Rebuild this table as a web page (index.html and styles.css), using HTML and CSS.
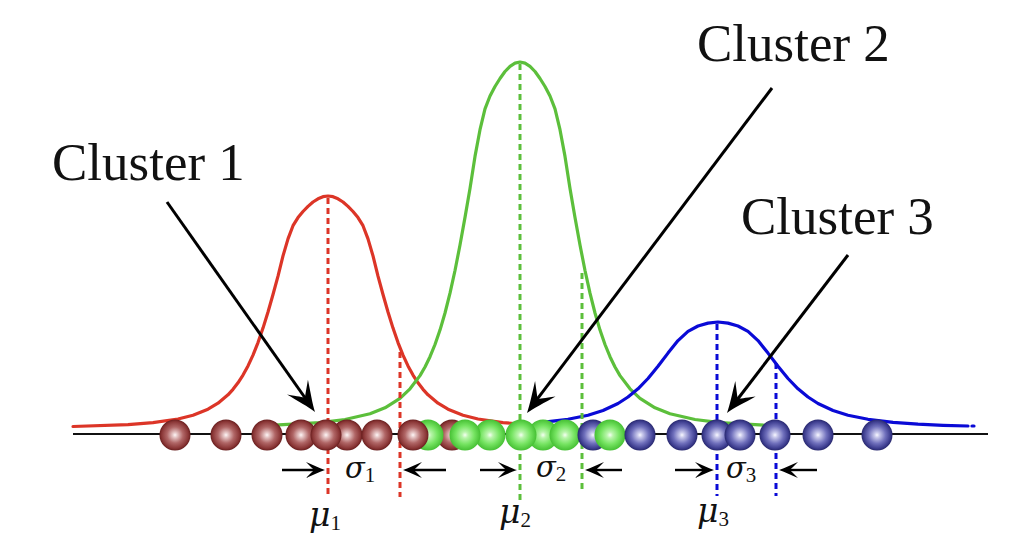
FILE: index.html
```html
<!DOCTYPE html>
<html lang="en">
<head>
<meta charset="utf-8">
<title>Gaussian mixture clusters</title>
<link rel="stylesheet" href="styles.css">
</head>
<body>
<svg class="figure" viewBox="0 0 1012 548" width="1012" height="548" xmlns="http://www.w3.org/2000/svg">
  <defs>
    <radialGradient id="ballRed" cx="50%" cy="50%" r="50%" fx="50%" fy="50%">
      <stop offset="0%" stop-color="#fdf6f6"/>
      <stop offset="16%" stop-color="#e6c6c6"/>
      <stop offset="52%" stop-color="#b06666"/>
      <stop offset="86%" stop-color="#8a3636"/>
      <stop offset="100%" stop-color="#681e1e"/>
    </radialGradient>
    <radialGradient id="ballGreen" cx="50%" cy="50%" r="50%" fx="50%" fy="50%">
      <stop offset="0%" stop-color="#f4fff1"/>
      <stop offset="20%" stop-color="#b9f5ab"/>
      <stop offset="60%" stop-color="#76e462"/>
      <stop offset="100%" stop-color="#46c034"/>
    </radialGradient>
    <radialGradient id="ballBlue" cx="50%" cy="50%" r="50%" fx="50%" fy="50%">
      <stop offset="0%" stop-color="#f8f8ff"/>
      <stop offset="16%" stop-color="#cacaec"/>
      <stop offset="55%" stop-color="#7070bc"/>
      <stop offset="86%" stop-color="#3e3e90"/>
      <stop offset="100%" stop-color="#28286e"/>
    </radialGradient>
    <path id="ah" d="M0,0 C-5,-1.5 -12,-5 -19,-8 C-14,-3 -12,-1 -11,0 C-12,1 -14,3 -19,8 C-12,5 -5,1.5 0,0 Z"/>
  </defs>

  <!-- axis -->
  <line class="axis" x1="73" y1="434" x2="988" y2="434"/>

  <!-- density curves -->
  <polyline class="curve red" points="73,426.5 128,424.6 153,422.6 178,419 193,415.2 208,409.2 218,403.2 228,394.8 233,389.3 238,382.8 243,375.1 248,365.9 253,355.1 258,342.6 263,328.1 268,312 273,294.5 278,276.2 283,255.9 288,238.9 293,225.7 298,217.6 303,211.5 308,206.4 313,202 318,198.8 323,196.7 328,196 333,196.7 338,198.8 343,202 348,206.4 353,211.5 358,217.6 363,225.7 368,238.9 373,255.9 378,276.2 383,294.5 388,312 393,328.1 398,342.6 403,355.1 408,365.9 413,375.1 418,382.8 423,389.3 428,394.8 438,403.2 448,409.2 463,415.2 478,419 503,422.6 528,424.6"/>
  <polyline class="curve green" points="265,425.7 320,422.7 345,419.5 370,413.8 385,407.8 400,398.3 410,388.8 420,375.6 425,367 430,356.7 435,344.5 440,330.1 445,313 450,293.2 455,270.5 460,245 465,217.4 470,188.5 475,156.4 480,129.7 485,108.8 490,96 495,86.5 500,78.5 505,71.5 510,66.4 515,63.1 520,62 525,63.1 530,66.4 535,71.5 540,78.5 545,86.5 550,96 555,108.8 560,129.7 565,156.4 570,188.5 575,217.4 580,245 585,270.5 590,293.2 595,313 600,330.1 605,344.5 610,356.7 615,367 620,375.6 630,388.8 640,398.3 655,407.8 670,413.8 695,419.5 720,422.7 775,425.7"/>
  <polyline class="curve blue" points="540,422.6 568,419.3 588,415.2 603,410.5 618,403.5 628,397 638,388.8 648,378.5 658,366.3 668,353.1 678,340.6 688,331.3 698,326 708,323.1 718,322 728,323.1 738,326 748,331.3 758,340.6 768,353.1 778,366.3 788,378.5 798,388.8 808,397 818,403.5 833,410.5 848,415.2 868,419.3 893,422.4 918,424.2 943,425.3 968,426"/>
  <line class="curve blue" x1="972" y1="426" x2="974" y2="426"/>

  <!-- mean / sigma markers -->
  <line class="dash red" x1="328" y1="198" x2="328" y2="498"/>
  <line class="dash red" x1="400" y1="352" x2="400" y2="497"/>
  <line class="dash green" x1="520" y1="64" x2="520" y2="500"/>
  <line class="dash green" x1="582" y1="273" x2="582" y2="490"/>
  <line class="dash blue" x1="717" y1="324" x2="717" y2="496"/>
  <line class="dash blue" x1="776" y1="363" x2="776" y2="496"/>

  <!-- data points -->
  <g class="balls">
    <circle class="ball-red" cx="175" cy="435" r="15.5"/>
    <circle class="ball-red" cx="226" cy="435" r="15.5"/>
    <circle class="ball-red" cx="267" cy="435" r="15.5"/>
    <circle class="ball-red" cx="301" cy="435" r="15.5"/>
    <circle class="ball-red" cx="347" cy="435" r="15.5"/>
    <circle class="ball-red" cx="377" cy="435" r="15.5"/>
    <circle class="ball-red" cx="326" cy="435" r="15.5"/>
    <circle class="ball-red" cx="452" cy="435" r="15.5"/>
    <circle class="ball-green" cx="428" cy="435" r="15.5"/>
    <circle class="ball-red" cx="413" cy="435" r="15.5"/>
    <circle class="ball-green" cx="490" cy="435" r="15.5"/>
    <circle class="ball-green" cx="465" cy="435" r="15.5"/>
    <circle class="ball-green" cx="543" cy="435" r="15.5"/>
    <circle class="ball-green" cx="565" cy="435" r="15.5"/>
    <circle class="ball-green" cx="521" cy="435" r="15.5"/>
    <circle class="ball-blue" cx="593" cy="435" r="15.5"/>
    <circle class="ball-green" cx="610" cy="435" r="15.5"/>
    <circle class="ball-blue" cx="640" cy="435" r="15.5"/>
    <circle class="ball-blue" cx="682" cy="435" r="15.5"/>
    <circle class="ball-blue" cx="717" cy="435" r="15.5"/>
    <circle class="ball-blue" cx="740" cy="435" r="15.5"/>
    <circle class="ball-blue" cx="775" cy="435" r="15.5"/>
    <circle class="ball-blue" cx="818" cy="435" r="15.5"/>
    <circle class="ball-blue" cx="877" cy="435" r="15.5"/>
  </g>

  <!-- cluster pointers -->
  <line class="shaft thick" x1="167" y1="202" x2="308" y2="402"/>
  <use class="head" href="#ah" transform="translate(315,412) rotate(54.8) scale(1.6)"/>
  <line class="shaft thick" x1="772" y1="88" x2="534" y2="403.4"/>
  <use class="head" href="#ah" transform="translate(527,413) rotate(127) scale(1.6)"/>
  <line class="shaft thick" x1="848" y1="255" x2="734.3" y2="403.5"/>
  <use class="head" href="#ah" transform="translate(727,413) rotate(127.4) scale(1.6)"/>

  <!-- sigma arrows -->
  <line class="shaft" x1="282" y1="470" x2="316" y2="470"/>
  <use class="head" href="#ah" transform="translate(325,470)"/>
  <line class="shaft" x1="446" y1="470" x2="412" y2="470"/>
  <use class="head" href="#ah" transform="translate(403,470) rotate(180)"/>

  <line class="shaft" x1="480" y1="470" x2="508" y2="470"/>
  <use class="head" href="#ah" transform="translate(517,470)"/>
  <line class="shaft" x1="622" y1="470" x2="594" y2="470"/>
  <use class="head" href="#ah" transform="translate(585,470) rotate(180)"/>

  <line class="shaft" x1="675" y1="470" x2="705" y2="470"/>
  <use class="head" href="#ah" transform="translate(714,470)"/>
  <line class="shaft" x1="817" y1="470" x2="788" y2="470"/>
  <use class="head" href="#ah" transform="translate(779,470) rotate(180)"/>

  <!-- labels -->
  <text class="label" x="52" y="180">Cluster 1</text>
  <text class="label" x="697" y="61">Cluster 2</text>
  <text class="label" x="741" y="234">Cluster 3</text>

  <text class="math sigma" x="345" y="478">σ<tspan class="sub" dy="4">1</tspan></text>
  <text class="math sigma" x="536" y="477">σ<tspan class="sub" dy="4">2</tspan></text>
  <text class="math sigma" x="726" y="478">σ<tspan class="sub" dy="4">3</tspan></text>

  <text class="math mu" x="309" y="526">μ<tspan class="sub" dy="4">1</tspan></text>
  <text class="math mu" x="499" y="523">μ<tspan class="sub" dy="4">2</tspan></text>
  <text class="math mu" x="697" y="522">μ<tspan class="sub" dy="4">3</tspan></text>
</svg>
</body>
</html>
```

FILE: styles.css
```css
html, body {
  margin: 0;
  padding: 0;
  background: #ffffff;
}

.figure {
  display: block;
  width: 1012px;
  height: 548px;
}

.axis {
  stroke: #111111;
  stroke-width: 2;
}

.curve {
  fill: none;
  stroke-width: 3.2;
  stroke-linejoin: round;
  stroke-linecap: round;
}

.dash {
  stroke-width: 3;
  stroke-dasharray: 6 4;
}

.red { stroke: #dc3527; }
.green { stroke: #5cbf3b; }
.blue { stroke: #0a0ad6; }

.ball-red { fill: url(#ballRed); }
.ball-green { fill: url(#ballGreen); }
.ball-blue { fill: url(#ballBlue); }

.shaft {
  stroke: #000000;
  stroke-width: 2.4;
}

.shaft.thick {
  stroke-width: 3;
}

.head {
  fill: #000000;
}

.label {
  font-family: "Liberation Serif", "Times New Roman", serif;
  font-size: 53px;
  fill: #111111;
}

.math {
  font-family: "DejaVu Serif", "Liberation Serif", serif;
  font-style: italic;
  fill: #111111;
}

.math.sigma {
  font-size: 29px;
}

.math.mu {
  font-size: 33px;
}

.math .sub {
  font-family: "Liberation Serif", "Times New Roman", serif;
  font-style: normal;
  font-size: 21px;
}
```
